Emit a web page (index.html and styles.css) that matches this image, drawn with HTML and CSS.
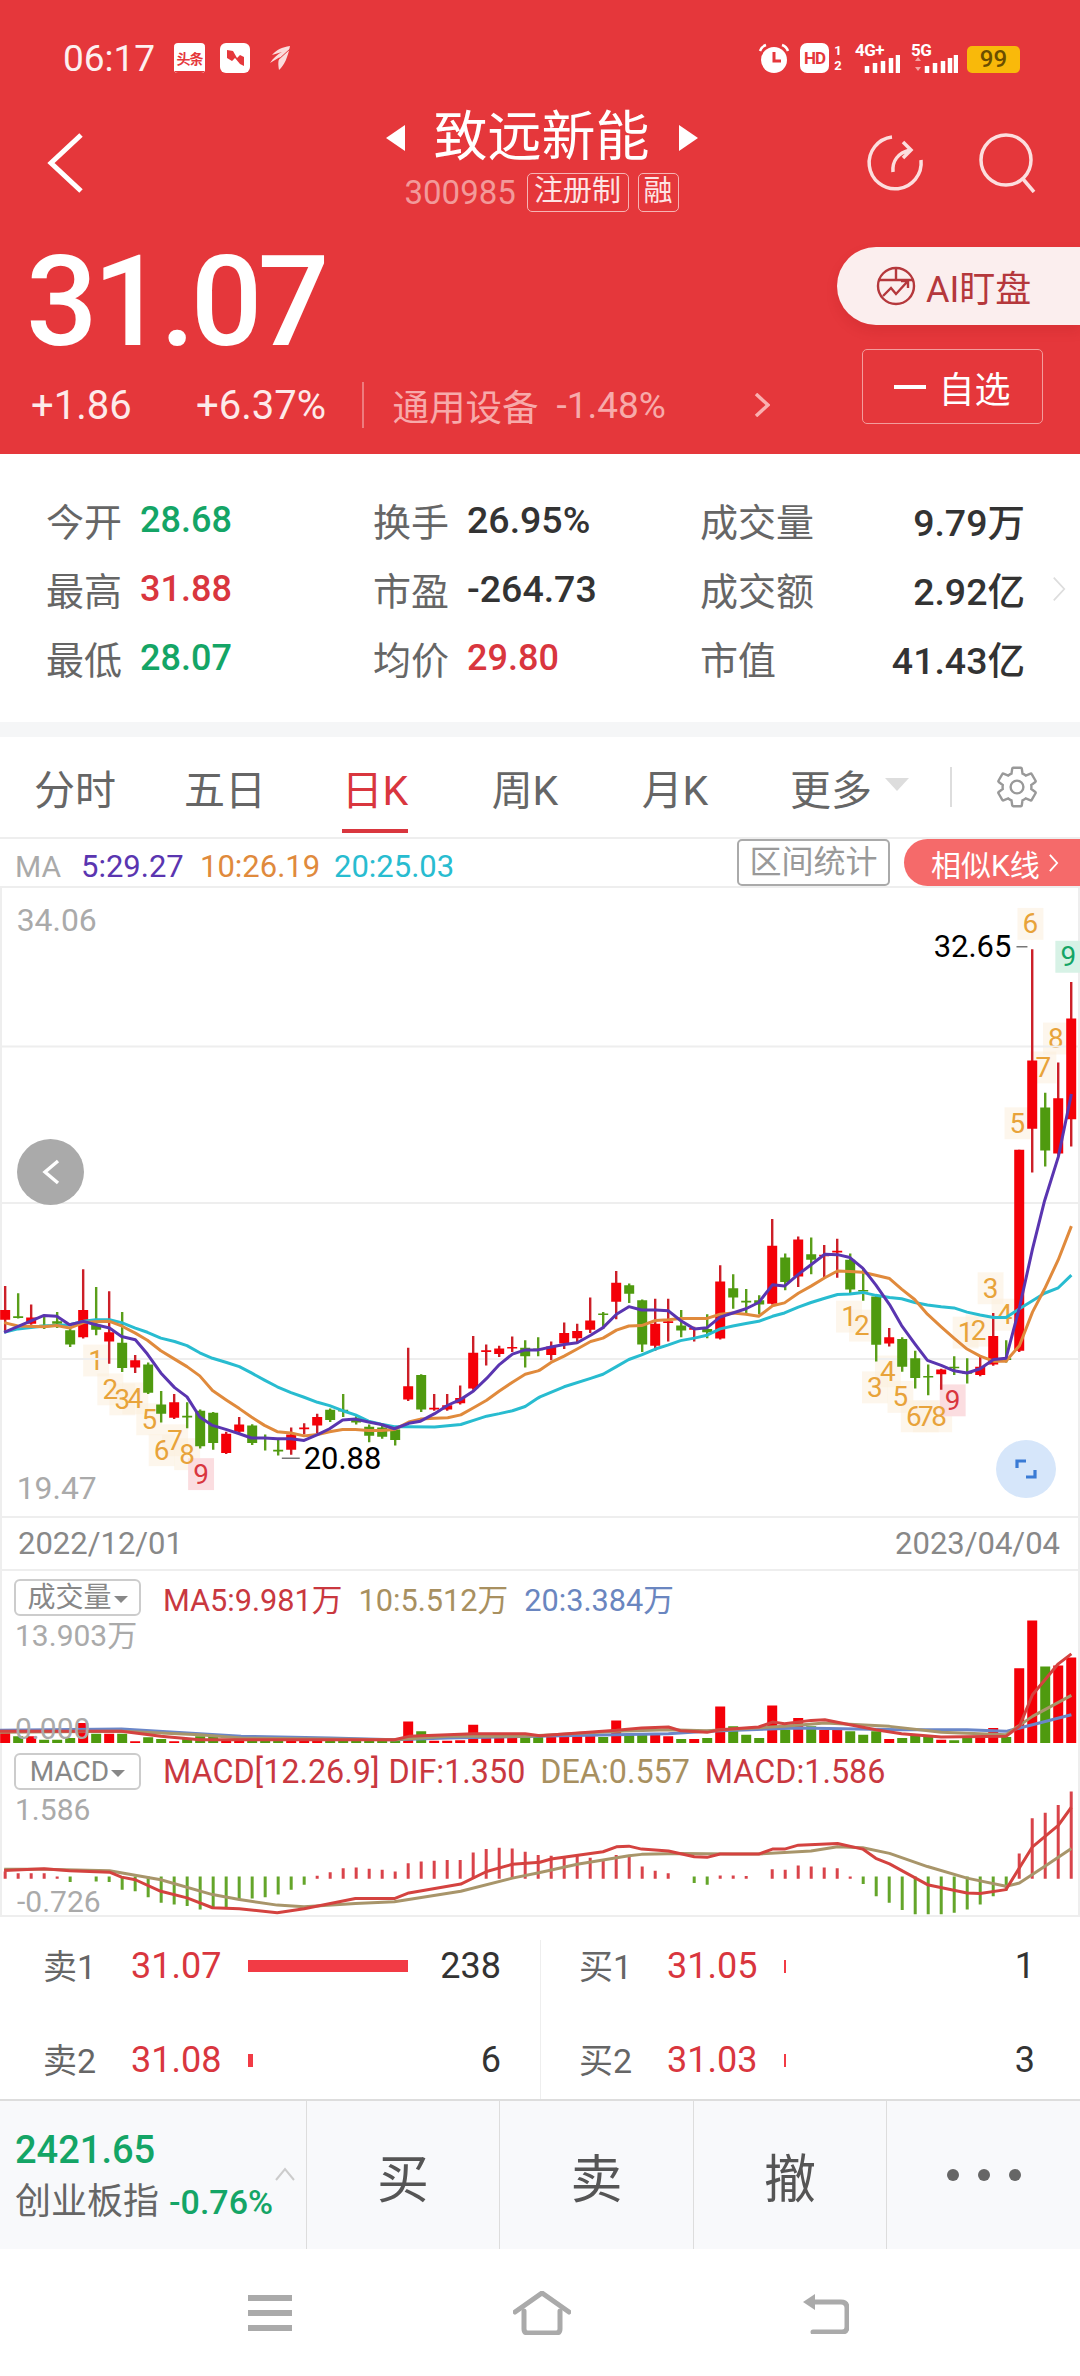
FILE: index.html
```html
<!DOCTYPE html>
<html lang="zh-CN">
<head>
<meta charset="utf-8">
<title>致远新能</title>
<link rel="stylesheet" href="styles.css">
</head>
<body>
<div class="app">
  <header class="hero">
    <div class="status">
      <div class="status-left">
        <span class="clock">06:17</span>
        <span class="app-toutiao"><i>头条</i></span>
        <svg class="ic-ribbon" viewBox="0 0 30 30"><rect width="30" height="30" rx="6" fill="#fff"/><path d="M7 7l6 1 4 7 3-3 4 2v9l-4-2-5-6-3 3-5-3z" fill="#e5373b"/></svg>
        <svg class="ic-wing" viewBox="0 0 22 24"><path d="M21 0C13 1 7 4 3 9l10-3C9 8 4 12 1 17l10-6c-2 3-2 7-1 13 5-4 9-13 11-24z" fill="#fbdcdc"/><path d="M21 3L9 14" stroke="#e5373b" stroke-width="1"/></svg>
      </div>
      <div class="status-right">
        <svg class="ic-alarm" viewBox="0 0 32 30"><circle cx="16" cy="17" r="13" fill="#fff"/><path d="M16 9v9h7" fill="none" stroke="#e5373b" stroke-width="3"/><path d="M2 8c1-3 3-5 6-6M30 8c-1-3-3-5-6-6" fill="none" stroke="#fff" stroke-width="2.5"/></svg>
        <span class="hd">HD</span>
        <span class="sim"><i>1</i><i>2</i></span>
        <span class="net net-4g"><b>4G+</b><svg viewBox="0 0 36 18"><path d="M3 11v7M11 8v10M19 6v12M27 3v15M34 0v18" stroke="#fff" stroke-width="4.5"/></svg></span>
        <span class="net net-5g"><b>5G</b><svg viewBox="0 0 46 18"><path d="M3 6l3-4 3 4zM3 12l3 4 3-4z" fill="#f6a5a5"/><path d="M15 11v7M23 8v10M31 6v12M38 3v15M44 0v18" stroke="#fff" stroke-width="4.5"/></svg></span>
        <span class="battery">99</span>
      </div>
    </div>

    <div class="titlebar">
      <svg class="ic-back" viewBox="0 0 36 60"><path d="M34 2L4 30l30 28" fill="none" stroke="#fff" stroke-width="5"/></svg>
      <div class="title-block">
        <div class="title-row">
          <svg class="ic-tri" viewBox="0 0 19 26"><path d="M19 0v26L0 13z" fill="#fff"/></svg>
          <h1 class="name">致远新能</h1>
          <svg class="ic-tri" viewBox="0 0 19 26"><path d="M0 0v26l19-13z" fill="#fff"/></svg>
        </div>
        <div class="code-row">
          <span class="code">300985</span>
          <span class="tag tag-wide">注册制</span>
          <span class="tag">融</span>
        </div>
      </div>
      <div class="title-actions">
        <svg class="ic-refresh" viewBox="0 0 58 60"><path d="M26 4A26 26 0 1 0 55 27" fill="none" stroke="#fcdede" stroke-width="3.5"/><path d="M27 39C26 28 32 20 44 17M37 9l8 8-8 8" fill="none" stroke="#fcdede" stroke-width="3.5"/></svg>
        <svg class="ic-search" viewBox="0 0 58 60"><circle cx="28" cy="27" r="25" fill="none" stroke="#fcdede" stroke-width="3.5"/><path d="M45 46l11 13" fill="none" stroke="#fcdede" stroke-width="3.5"/></svg>
      </div>
    </div>

    <div class="quote">
      <div class="quote-left">
        <div class="price">31.07</div>
        <div class="change-row">
          <span class="chg chg-a">+1.86</span>
          <span class="chg chg-b">+6.37%</span>
          <span class="vline"></span>
          <span class="sector">通用设备</span>
          <span class="sector-chg">-1.48%</span>
          <svg class="ic-more" viewBox="0 0 16 24"><path d="M2 1l12 11L2 23" fill="none" stroke="#fab0b0" stroke-width="3.5"/></svg>
        </div>
      </div>
      <div class="quote-right">
        <div class="ai-pill">
          <svg class="ic-ai" viewBox="0 0 40 40"><circle cx="20" cy="20" r="18" fill="none" stroke="#b5383c" stroke-width="2.4"/><path d="M3 14h34M20 2v12" fill="none" stroke="#b5383c" stroke-width="2.4"/><path d="M7 30l8-8 5 6 11-12M25 15h7v7" fill="none" stroke="#b5383c" stroke-width="2.4"/></svg>
          <span>AI盯盘</span>
        </div>
        <div class="watch-btn"><span class="minus"></span><span>自选</span></div>
      </div>
    </div>
  </header>

  <section class="stats">
    <div class="stat"><span class="k">今开</span><span class="v green">28.68</span></div>
    <div class="stat"><span class="k">换手</span><span class="v">26.95%</span></div>
    <div class="stat apart"><span class="k">成交量</span><span class="v">9.79万</span></div>
    <div class="stat"><span class="k">最高</span><span class="v red">31.88</span></div>
    <div class="stat"><span class="k">市盈</span><span class="v">-264.73</span></div>
    <div class="stat apart"><span class="k">成交额</span><span class="v">2.92亿</span></div>
    <div class="stat"><span class="k">最低</span><span class="v green">28.07</span></div>
    <div class="stat"><span class="k">均价</span><span class="v red">29.80</span></div>
    <div class="stat apart"><span class="k">市值</span><span class="v">41.43亿</span></div>
    <svg class="ic-stats-more" viewBox="0 0 16 30"><path d="M2 2l12 13L2 28" fill="none" stroke="#ddd" stroke-width="2"/></svg>
  </section>

  <div class="band"></div>

  <nav class="tabs">
    <div class="tab">分时</div>
    <div class="tab">五日</div>
    <div class="tab on">日K</div>
    <div class="tab">周K</div>
    <div class="tab">月K</div>
    <div class="tab more">更多<span class="caret"></span></div>
    <span class="tab-sep"></span>
    <svg class="ic-gear" viewBox="0 0 24 24"><path d="M19.14 12.94c.04-.3.06-.61.06-.94 0-.32-.02-.64-.07-.94l2.03-1.58c.18-.14.23-.41.12-.61l-1.92-3.32c-.12-.22-.37-.29-.59-.22l-2.39.96c-.5-.38-1.03-.7-1.62-.94l-.36-2.54c-.04-.24-.24-.41-.48-.41h-3.84c-.24 0-.43.17-.47.41l-.36 2.54c-.59.24-1.13.57-1.62.94l-2.39-.96c-.22-.08-.47 0-.59.22L2.74 8.87c-.12.21-.08.47.12.61l2.03 1.58c-.05.3-.09.63-.09.94s.02.64.07.94l-2.03 1.58c-.18.14-.23.41-.12.61l1.92 3.32c.12.22.37.29.59.22l2.39-.96c.5.38 1.03.7 1.62.94l.36 2.54c.05.24.24.41.48.41h3.84c.24 0 .44-.17.47-.41l.36-2.54c.59-.24 1.13-.56 1.62-.94l2.39.96c.22.08.47 0 .59-.22l1.92-3.32c.12-.22.07-.47-.12-.61l-2.01-1.58z" fill="none" stroke="#999" stroke-width="1.2"/><circle cx="12" cy="12" r="3.2" fill="none" stroke="#999" stroke-width="1.2"/></svg>
  </nav>

  <div class="ma-row">
    <span class="ma-label">MA</span>
    <span class="ma5">5:29.27</span>
    <span class="ma10">10:26.19</span>
    <span class="ma20">20:25.03</span>
    <span class="range-btn">区间统计</span>
    <span class="similar-btn">相似K线<svg viewBox="0 0 12 22"><path d="M2 2l8 9-8 9" fill="none" stroke="#fff" stroke-width="2"/></svg></span>
  </div>

  <section class="chart-main">
    <svg id="notes" class="notes" viewBox="0 0 1080 630">
      <text class="axis" x="15" y="32">34.06</text>
      <text class="axis" x="15" y="602">19.47</text>
      <text class="extreme" x="303" y="572">20.88</text>
      <text class="extreme" x="935" y="59">32.65</text>
      <path d="M281 572h18M1018 59h11" stroke="#777" stroke-width="1.5"/>
    </svg>
    <svg id="kline" class="plot" viewBox="0 19 3136 1497" preserveAspectRatio="none"></svg>
    <div class="round-back"><svg viewBox="0 0 18 26"><path d="M16 2L3 13l13 11" fill="none" stroke="#fff" stroke-width="3.4"/></svg></div>
    <div class="round-expand"><svg viewBox="0 0 22 22"><path d="M2 10V3h9M20 12v7h-9" fill="none" stroke="#3a7bd5" stroke-width="3.2"/></svg></div>
  </section>

  <div class="dates"><span>2022/12/01</span><span>2023/04/04</span></div>

  <section class="panel panel-vol">
    <svg id="vol" class="plot" viewBox="0 183 3136 517" preserveAspectRatio="none"></svg>
    <div class="panel-head">
      <span class="sel">成交量<i></i></span>
      <span class="c-red">MA5:9.981万</span>
      <span class="c-tan">10:5.512万</span>
      <span class="c-blue">20:3.384万</span>
    </div>
    <div class="panel-max">13.903万</div>
    <div class="panel-min vol-min">0.000</div>
  </section>

  <section class="panel panel-macd">
    <svg id="macd" class="plot" viewBox="0 700 3136 522" preserveAspectRatio="none"></svg>
    <div class="panel-head">
      <span class="sel">MACD<i></i></span>
      <span class="c-red macd-params">MACD[12.26.9]</span>
      <span class="c-red">DIF:1.350</span>
      <span class="c-tan">DEA:0.557</span>
      <span class="c-red">MACD:1.586</span>
    </div>
    <div class="panel-max">1.586</div>
    <div class="panel-min macd-min">-0.726</div>
  </section>

  <section class="book">
    <div class="book-col">
      <div class="book-row"><span class="bk">卖1</span><span class="bp">31.07</span><span class="bar bar-long"></span><span class="bq">238</span></div>
      <div class="book-row"><span class="bk">卖2</span><span class="bp">31.08</span><span class="bar bar-short"></span><span class="bq">6</span></div>
    </div>
    <div class="book-col book-col-right">
      <div class="book-row"><span class="bk">买1</span><span class="bp">31.05</span><span class="bar bar-tick"></span><span class="bq">1</span></div>
      <div class="book-row"><span class="bk">买2</span><span class="bp">31.03</span><span class="bar bar-tick"></span><span class="bq">3</span></div>
    </div>
  </section>

  <section class="tradebar">
    <div class="index-cell">
      <div class="idx-val">2421.65</div>
      <div class="idx-line"><span class="idx-name">创业板指</span><span class="idx-chg">-0.76%</span></div>
      <svg class="ic-up" viewBox="0 0 20 14"><path d="M1 13l9-11 9 11" fill="none" stroke="#ccc" stroke-width="2"/></svg>
    </div>
    <div class="act">买</div>
    <div class="act">卖</div>
    <div class="act">撤</div>
    <div class="act dots"><i></i><i></i><i></i></div>
  </section>

  <footer class="navbar">
    <svg class="nav-menu" viewBox="0 0 44 36"><path d="M0 3h44M0 18h44M0 33h44" stroke="#aaa" stroke-width="6"/></svg>
    <svg class="nav-home" viewBox="0 0 58 44"><path d="M2 21L29 2l27 19" fill="none" stroke="#aaa" stroke-width="5" stroke-linecap="round" stroke-linejoin="round"/><path d="M11 20v18q0 4 4 4h28q4 0 4-4V20" fill="none" stroke="#aaa" stroke-width="5" stroke-linecap="round"/></svg>
    <svg class="nav-back" viewBox="0 0 48 42"><path d="M2 10l12-8v16z" fill="#aaa"/><path d="M10 10h30q6 0 6 6v19q0 5-5 5H12" fill="none" stroke="#aaa" stroke-width="5" stroke-linecap="round"/></svg>
  </footer>
</div>
<script src="chart.js"></script>
</body>
</html>
```

FILE: styles.css
```css
* { box-sizing: border-box; margin: 0; padding: 0; }
html, body { width: 1080px; height: 2376px; background: #fff; overflow: hidden; }
body { font-family: Roboto, "Noto Sans CJK SC", sans-serif; color: #333; }
i { font-style: normal; }
svg { display: block; flex: none; }
.app { width: 1080px; height: 2376px; display: flex; flex-direction: column; }

/* hero */
.hero { height: 454px; padding-top: 43px; background: #e5373b; color: #fff; }
.status { display: flex; justify-content: space-between; align-items: center; height: 30px; padding: 0 60px 0 63px; }
.status-left, .status-right { display: flex; align-items: center; }
.clock { font-size: 37px; width: 111px; color: #fdf0f0; }
.app-toutiao { width: 31px; height: 30px; background: #fff; border-top: 3px solid #fff; border-radius: 4px; overflow: hidden; display: flex; align-items: center; justify-content: center; }
.app-toutiao i { display: block; width: 100%; background: #fff; color: #e5373b; font-size: 14px; font-weight: 700; line-height: 24px; text-align: center; letter-spacing: -1px; white-space: nowrap; border-bottom: 2px solid #e5373b; }
.ic-ribbon { width: 30px; height: 30px; margin-left: 15px; }
.ic-wing { width: 22px; height: 24px; margin-left: 19px; }
.ic-alarm { width: 32px; height: 30px; }
.hd { width: 29px; height: 30px; margin-left: 10px; background: #fff; color: #e5373b; font-size: 17px; font-weight: 700; border-radius: 7px; text-align: center; line-height: 30px; letter-spacing: -1px; }
.sim { display: flex; flex-direction: column; width: 14px; margin-left: 2px; font-size: 13px; font-weight: 700; line-height: 15px; text-align: center; }
.net { position: relative; display: block; height: 30px; }
.net b { position: absolute; top: -2px; left: 0; font-size: 17px; font-weight: 700; line-height: 18px; white-space: nowrap; letter-spacing: -.5px; }
.net svg { position: absolute; bottom: 0; right: 0; height: 18px; }
.net-4g { width: 45px; margin-left: 10px; }
.net-4g svg { width: 36px; }
.net-5g { width: 47px; margin-left: 11px; }
.net-5g svg { width: 46px; }
.battery { width: 53px; height: 27px; margin-left: 9px; margin-top: 3px; background: #f9b90a; color: #6b4e00; font-size: 24px; font-weight: 500; line-height: 27px; text-align: center; border-radius: 5px; }

.titlebar { display: grid; grid-template-columns: 1fr auto 1fr; height: 100px; margin-top: 39px; padding: 0 44px 0 47px; }
.ic-back { width: 36px; height: 60px; margin-top: 21px; }
.title-block { display: flex; flex-direction: column; align-items: center; }
.title-row { display: flex; align-items: center; gap: 29px; height: 58px; margin-top: -3px; }
.ic-tri { width: 19px; height: 26px; }
.name { font-size: 54px; font-weight: 400; line-height: 58px; color: #fff; }
.code-row { display: flex; align-items: center; margin-top: 6px; height: 39px; }
.code { font-size: 33px; color: #f29a9a; width: 122px; }
.tag { display: block; height: 39px; width: 41px; border: 1.5px solid #f6b4b4; border-radius: 5px; font-size: 29px; line-height: 35px; text-align: center; color: #fde4e4; margin-left: 9px; }
.tag-wide { width: 102px; margin-left: 0; }
.title-actions { display: flex; justify-content: flex-end; gap: 54px; padding-top: 21px; }
.ic-refresh, .ic-search { width: 58px; height: 60px; }

.quote { display: flex; justify-content: space-between; margin-top: 35px; }
.quote-left { padding-left: 26px; }
.price { font-size: 126px; font-weight: 500; line-height: 110px; letter-spacing: -4.5px; color: #fff; }
.change-row { display: flex; align-items: center; height: 46px; margin-top: 25px; padding-left: 5px; font-size: 40px; white-space: nowrap; }
.chg { color: #fdeaea; }
.chg-a { width: 165px; }
.chg-b { width: 166px; }
.vline { width: 1.5px; height: 46px; background: #ee7b7e; }
.sector { margin-left: 29px; color: #f7aaaa; font-size: 36.5px; }
.sector-chg { margin-left: 18px; width: 197px; color: #f7aaaa; font-size: 37px; }
.ic-more { width: 16px; height: 24px; }
.quote-right { width: 243px; display: flex; flex-direction: column; align-items: flex-start; }
.ai-pill { width: 243px; height: 78px; display: flex; align-items: center; padding-left: 39px; gap: 10px; background: #fbeeee; border-radius: 39px 0 0 39px; color: #b5383c; font-size: 36px; white-space: nowrap; box-shadow: 0 6px 12px rgba(150, 20, 20, .15); }
.ic-ai { width: 40px; height: 40px; }
.watch-btn { width: 181px; height: 75px; margin: 24px 0 0 25px; display: flex; align-items: center; justify-content: center; gap: 12px; border: 1.5px solid #f39c9c; border-radius: 5px; color: #fff; font-size: 36px; }
.minus { width: 32px; height: 4px; background: #fff; }

/* stats */
.stats { height: 268px; padding: 31px 0 0 46px; display: grid; grid-template-columns: 327px 327px 325px; grid-auto-rows: 69px; align-items: center; position: relative; }
.stat { display: flex; align-items: center; gap: 18px; font-size: 38px; white-space: nowrap; }
.stat .v { font-size: 37.5px; font-weight: 500; color: #333; }
.stat .k { color: #666; }
.stat.apart { justify-content: space-between; }
.stat .v.green { font-size: 36px; color: #14a566; }
.stat .v.red { font-size: 36px; color: #d9363e; }
.ic-stats-more { position: absolute; left: 1052px; top: 120px; width: 14px; height: 30px; }
.band { height: 15px; background: #f5f6f7; }

/* tabs */
.tabs { height: 100px; display: flex; align-items: center; }
.tab { width: 150px; text-align: center; font-size: 41px; color: #666; position: relative; }
.tab.on { color: #d9363e; }
.tab.on::after { content: ""; position: absolute; left: 42px; width: 66px; height: 4px; background: #d9363e; top: 72px; }
.tab.more { padding-left: 12px; }
.caret { position: absolute; left: 135px; top: 21px; width: 0; height: 0; border-left: 12px solid transparent; border-right: 12px solid transparent; border-top: 13px solid #ddd; }
.tab-sep { width: 1.5px; height: 40px; margin-left: 50px; background: #ddd; }
.ic-gear { width: 48px; height: 48px; margin-left: 41px; }

/* MA row */
.ma-row { height: 51px; display: flex; align-items: center; padding-left: 15px; border-top: 2px solid #eee; border-bottom: 2px solid #eee; font-size: 31px; white-space: nowrap; }
.ma-label { color: #aaa; width: 66px; font-size: 30px; padding-top: 7px; }
.ma5 { color: #5a35b0; width: 119px; padding-top: 7px; }
.ma10 { color: #e08a3c; width: 134px; padding-top: 7px; }
.ma20 { color: #28bcd0; width: 403px; padding-top: 7px; }
.range-btn { width: 153px; height: 47px; border: 2px solid #aaa; border-radius: 5px; color: #999; font-size: 32px; line-height: 42px; text-align: center; }
.similar-btn { margin-left: 14px; width: 176px; height: 47px; background: #f56a6a; border-radius: 24px 0 0 24px; color: #fff; font-size: 30px; display: flex; align-items: center; padding-left: 27px; gap: 8px; }
.similar-btn svg { width: 11px; height: 20px; }

/* charts */
.chart-main { position: relative; height: 630px; box-shadow: inset 2px 0 #eee, inset -2px 0 #eee; border-bottom: 2px solid #eee; }
.plot, .notes { position: absolute; left: 0; top: 0; width: 100%; height: 100%; }
.plot path, .plot line, .plot polyline { vector-effect: non-scaling-stroke; fill: none; }
.grid { stroke: #eee; stroke-width: 2px; }
.wick-r { stroke: #cc1f28; stroke-width: 2.4px; }
.wick-g { stroke: #5a9e1a; stroke-width: 2.4px; }
.body-r { stroke: #f40008; stroke-width: 10px; }
.body-g { stroke: #4f9a0f; stroke-width: 10px; }
.line5 { stroke: #5a35b0; stroke-width: 3px; stroke-linejoin: round; }
.line10 { stroke: #e08a3c; stroke-width: 3px; stroke-linejoin: round; }
.line20 { stroke: #28bcd0; stroke-width: 3px; stroke-linejoin: round; }
.vline-red { stroke: #d4423f; stroke-width: 3px; stroke-linejoin: round; }
.vline-tan { stroke: #a8956a; stroke-width: 3px; stroke-linejoin: round; }
.vline-blue { stroke: #6a86c8; stroke-width: 3px; stroke-linejoin: round; }
.hist-r { stroke: #d9434a; stroke-width: 3px; }
.hist-g { stroke: #64a52a; stroke-width: 3px; }
.axis { font-size: 32px; fill: #aaa; dominant-baseline: central; }
.extreme { font-size: 31px; fill: #000; dominant-baseline: central; }
.td { font-size: 28px; text-anchor: middle; dominant-baseline: central; fill: #e8a33a; }
.td-bg { fill: #fceedd; opacity: .55; }
.td-pink { fill: #d9363e; }
.td-pink-bg { fill: #fbdde0; }
.td-green { fill: #14a566; }
.td-green-bg { fill: #d7f2e6; }
.round-back { position: absolute; left: 17px; top: 251px; width: 67px; height: 66px; border-radius: 50%; background: #aaa; display: flex; align-items: center; justify-content: center; }
.round-back svg { width: 18px; height: 26px; }
.round-expand { position: absolute; left: 996px; top: 552px; width: 60px; height: 58px; border-radius: 50%; background: #d6e6fa; display: flex; align-items: center; justify-content: center; }
.round-expand svg { width: 22px; height: 22px; }

.dates { height: 53px; display: flex; justify-content: space-between; align-items: center; padding: 0 20px 0 18px; font-size: 31px; color: #888; box-shadow: inset 2px 0 #eee, inset -2px 0 #eee; border-bottom: 2px solid #eee; }
.panel { position: relative; box-shadow: inset 2px 0 #eee, inset -2px 0 #eee; }
.panel-vol { height: 172px; }
.panel-macd { height: 174px; border-bottom: 2px solid #eee; }
.panel-head { position: relative; display: flex; align-items: center; height: 37px; margin: 8px 0 0 14px; font-size: 30.7px; gap: 16px; white-space: nowrap; }
.panel-macd .panel-head { margin-top: 10px; font-size: 32.3px; gap: 15px; }
.sel { width: 127px; height: 37px; border: 2px solid #ccc; border-radius: 6px; font-size: 28px; line-height: 33px; color: #888; display: flex; align-items: center; justify-content: center; gap: 2px; margin-right: 6px; }
.panel-macd .sel { font-size: 28px; margin-right: 7px; }
.macd-params { margin-right: -6px; }
.sel i { width: 0; height: 0; border-left: 7px solid transparent; border-right: 7px solid transparent; border-top: 7px solid #888; margin-top: 3px; }
.c-red { color: #c9383f; }
.c-tan { color: #a89060; }
.c-blue { color: #6a86c0; }
.panel-max { position: relative; margin: 2px 0 0 15px; font-size: 30px; line-height: 36px; color: #aaa; }
.panel-min { position: absolute; left: 15px; font-size: 30px; line-height: 26px; color: #aaa; }
.vol-min { top: 145px; }
.macd-min { top: 146px; left: 17px; }

/* order book */
.book { height: 182px; display: flex; }
.book-col { width: 540px; height: 159px; margin-top: 23px; padding: 1px 39px 0 43px; display: flex; flex-direction: column; gap: 44px; }
.book-col-right { border-left: 1.5px solid #eee; padding: 1px 45px 0 38px; }
.book-row { height: 50px; display: flex; align-items: center; font-size: 36px; }
.bk { width: 88px; color: #666; font-size: 34px; white-space: nowrap; padding-bottom: 4px; }
.bp { width: 117px; color: #d9363e; }
.bar { display: block; background: #f23b45; }
.bar-long { width: 160px; height: 12px; }
.bar-short { width: 5px; height: 13px; }
.bar-tick { width: 2px; height: 13px; }
.bq { margin-left: auto; color: #333; }

/* trade bar */
.tradebar { height: 150px; display: grid; grid-template-columns: 306px 193px 194px 193px 194px; background: #f8f9fb; border-top: 2px solid #ddd; }
.index-cell { position: relative; padding: 24px 0 0 15px; }
.idx-val { font-size: 38px; font-weight: 500; color: #14a566; line-height: 50px; }
.idx-line { display: flex; align-items: center; gap: 10px; margin-top: 2px; line-height: 50px; white-space: nowrap; }
.idx-name { font-size: 36px; color: #666; }
.idx-chg { font-size: 34px; font-weight: 500; color: #14a566; }
.ic-up { position: absolute; left: 275px; top: 66px; width: 20px; height: 14px; }
.act { display: flex; align-items: center; justify-content: center; border-left: 1.5px solid #ddd; font-size: 52px; color: #555; }
.dots { gap: 19px; }
.dots i { width: 12px; height: 12px; border-radius: 50%; background: #666; }

/* navigation */
.navbar { flex: 1; display: flex; align-items: center; padding-left: 248px; }
.nav-menu { width: 44px; height: 36px; }
.nav-home { width: 58px; height: 44px; margin-left: 221px; }
.nav-back { width: 48px; height: 42px; margin-left: 230px; }
```

FILE: chart.js
```js
(function () {
  var NS = "http://www.w3.org/2000/svg";
  function el(parent, name, attrs, text) {
    var n = document.createElementNS(NS, name);
    for (var k in attrs) n.setAttribute(k, attrs[k]);
    if (text !== undefined) n.textContent = text;
    parent.appendChild(n);
    return n;
  }
  function xOf(i) { return 15 + 37.75 * i; }
  function pts(left, right) {
    var out = [], i;
    for (i = 0; i < left.length; i += 2) out.push(left[i] + "," + left[i + 1]);
    for (i = 0; i < right.length; i += 2) out.push((right[i] + 1568) + "," + right[i + 1]);
    return out.join(" ");
  }

  /* colour, high, body top, body bottom, low */
  var candles = [
    "r",968,1025,1048,1080, "g",985,1040,1042,1045, "r",1012,1043,1058,1060, "g",1040,1060,1063,1070,
    "g",1030,1052,1058,1068, "g",1070,1073,1107,1113, "r",928,1025,1090,1093, "g",970,1060,1072,1085,
    "r",980,1078,1100,1153, "g",1030,1103,1163,1173, "r",1132,1145,1162,1175, "g",1150,1155,1222,1225,
    "g",1218,1250,1272,1293, "r",1225,1245,1282,1285, "g",1245,1277,1281,1307, "g",1262,1265,1350,1355,
    "g",1268,1270,1342,1358, "r",1315,1320,1366,1368, "r",1280,1298,1315,1320, "g",1297,1300,1342,1347,
    "g",1322,1328,1331,1360, "g",1330,1358,1361,1372, "r",1305,1322,1358,1370, "r",1295,1305,1308,1322,
    "r",1272,1280,1300,1318, "g",1260,1263,1287,1292, "g",1225,1263,1266,1280, "g",1278,1283,1293,1298,
    "g",1298,1303,1325,1340, "g",1300,1305,1327,1332, "g",1305,1310,1335,1348, "r",1115,1207,1238,1242,
    "g",1178,1180,1262,1268, "r",1225,1258,1262,1265, "r",1225,1252,1262,1265, "r",1205,1235,1247,1250,
    "r",1087,1127,1212,1215, "r",1107,1121,1124,1157, "r",1110,1117,1130,1137, "r",1088,1113,1116,1125,
    "g",1097,1115,1135,1162, "g",1090,1117,1120,1135, "r",1100,1112,1132,1145, "r",1055,1080,1105,1118,
    "r",1058,1075,1092,1105, "r",995,1050,1072,1080, "g",1030,1033,1036,1070, "r",932,960,1005,1047,
    "g",962,966,986,1008, "g",1000,1002,1107,1125, "r",998,1058,1110,1122, "r",998,1052,1056,1100,
    "g",1025,1062,1074,1090, "r",1065,1068,1072,1100, "g",1035,1070,1078,1092, "r",918,957,1093,1095,
    "g",940,973,995,1022, "g",975,1003,1006,1032, "g",990,1002,1012,1035, "r",808,872,1010,1012,
    "g",890,900,958,978, "r",850,857,945,970, "g",852,892,905,940, "r",870,893,896,948,
    "r",855,884,888,948, "g",890,905,976,985, "g",925,977,980,1003, "g",990,993,1108,1148,
    "r",1068,1090,1105,1112, "g",1090,1094,1160,1172, "g",1122,1140,1187,1212, "g",1155,1182,1186,1228,
    "r",1165,1167,1178,1215, "g",1135,1160,1163,1180, "g",1140,1173,1176,1200, "r",1133,1160,1180,1183,
    "r",1032,1087,1155,1158, "g",1097,1140,1143,1150, "r",643,643,1122,1125, "r",165,430,593,697,
    "g",507,542,645,683, "r",435,520,652,655, "r",243,330,570,635
  ];

  var kline = document.getElementById("kline");
  [397, 770, 1142].forEach(function (y) {
    el(kline, "line", { "class": "grid", x1: 0, x2: 3136, y1: y, y2: y });
  });
  var w = { r: "", g: "" }, b = { r: "", g: "" };
  for (var c = 0; c < candles.length; c += 5) {
    var x = xOf(c / 5), col = candles[c];
    w[col] += "M" + x + " " + candles[c + 1] + "V" + candles[c + 4];
    b[col] += "M" + x + " " + candles[c + 2] + "V" + Math.max(candles[c + 3], candles[c + 2] + 4);
  }
  el(kline, "path", { "class": "wick-r", d: w.r });
  el(kline, "path", { "class": "wick-g", d: w.g });
  el(kline, "path", { "class": "body-r", d: b.r });
  el(kline, "path", { "class": "body-g", d: b.g });

  el(kline, "polyline", { "class": "line20", points: pts(
    [12,1078,52,1070,128,1063,202,1060,242,1052,278,1048,318,1048,353,1055,393,1068,428,1078,467,1092,507,1100,543,1110,580,1127,617,1140,658,1150,695,1160,730,1175,768,1192,805,1208,845,1222,883,1233,922,1245,957,1253,995,1265,1032,1275,1070,1290,1107,1297,1145,1303,1187,1303,1262,1304,1338,1298,1375,1288,1413,1278,1450,1272,1488,1265,1525,1255,1562,1235],
    [0,1232,70,1208,147,1188,183,1178,222,1160,258,1143,295,1132,335,1118,373,1108,408,1098,448,1092,485,1085,523,1070,560,1063,598,1057,635,1052,675,1040,710,1032,750,1018,787,1007,827,997,864,988,900,987,937,983,975,990,1015,995,1050,998,1088,1007,1125,1013,1165,1017,1202,1020,1240,1030,1278,1037,1317,1043,1353,1043,1392,1022,1430,1003,1465,985,1505,972,1543,942]) });
  el(kline, "polyline", { "class": "line10", points: pts(
    [12,1055,52,1063,128,1065,165,1062,202,1068,242,1055,278,1053,318,1052,353,1063,393,1080,428,1097,467,1122,507,1142,543,1160,580,1182,617,1217,658,1240,695,1260,730,1280,768,1300,805,1315,845,1318,883,1325,922,1322,957,1315,995,1310,1032,1310,1070,1312,1107,1312,1145,1310,1187,1292,1221,1285,1262,1283,1300,1282,1338,1275,1375,1258,1413,1240,1450,1218,1488,1197,1525,1178,1562,1170],
    [0,1168,32,1150,70,1135,108,1118,147,1100,183,1092,222,1073,258,1063,295,1062,335,1050,373,1048,408,1045,448,1045,485,1045,523,1035,560,1032,598,1035,635,1040,675,1015,710,1008,750,985,787,968,827,948,864,932,900,933,937,935,975,942,1015,950,1050,975,1088,1000,1125,1035,1165,1065,1202,1092,1240,1118,1278,1135,1317,1147,1353,1147,1392,1110,1430,1030,1465,975,1505,905,1543,825]) });
  el(kline, "polyline", { "class": "line5", points: pts(
    [12,1078,92,1050,128,1038,165,1040,202,1060,242,1052,278,1060,318,1068,353,1088,393,1096,428,1130,467,1175,507,1210,543,1232,580,1280,617,1300,658,1310,695,1320,730,1330,768,1330,805,1332,845,1332,883,1336,922,1322,957,1308,995,1287,1032,1285,1070,1292,1107,1298,1145,1308,1187,1295,1221,1290,1262,1272,1300,1252,1338,1238,1375,1218,1413,1188,1450,1155,1488,1130,1525,1120,1562,1120],
    [32,1113,70,1107,108,1103,147,1085,183,1067,222,1035,258,1017,295,1025,335,1025,373,1027,408,1050,448,1070,485,1067,523,1042,560,1032,598,1022,635,1007,675,965,710,968,750,940,787,917,827,892,864,893,900,900,937,925,975,965,1015,1012,1050,1062,1088,1105,1125,1145,1165,1157,1202,1170,1240,1175,1278,1165,1317,1143,1353,1140,1392,1020,1430,880,1465,765,1505,660,1543,510]) });

  /* sequential count marks: x, y, digit, kind */
  var marks = [
    94.7,474,1,"", 109,503,2,"", 121,513,3,"", 134,512,4,"", 148,533,5,"", 160.5,564,6,"", 174,554,7,"", 186,568,8,"", 200,588,9,"pink",
    850,430,1,"", 863,439,2,"", 876,501,3,"", 889,485,4,"", 901.6,510.5,5,"", 915,530,6,"", 927,530,7,"", 940.5,530,8,"", 954,514,9,"pink",
    967,446,1,"", 980,444,2,"", 992,401.5,3,"", 1006,428,4,"", 1019,236,5,"", 1032,36,6,"", 1045,180,7,"", 1057.6,151,8,"", 1070,69,9,"green"
  ];
  var notes = document.getElementById("notes");
  for (var m = 0; m < marks.length; m += 4) {
    var kind = marks[m + 3];
    el(notes, "rect", { "class": kind ? "td-" + kind + "-bg" : "td-bg", x: marks[m] - 13, y: marks[m + 1] - 16, width: 26, height: 32 });
  }
  for (m = 0; m < marks.length; m += 4) {
    kind = marks[m + 3];
    el(notes, "text", { "class": kind ? "td td-" + kind : "td", x: marks[m], y: marks[m + 1] }, marks[m + 2]);
  }

  /* volume: colour, top */
  var bars = "r662 g680 r680 g690 g690 g685 r640 g672 r672 g672 r695 g683 g688 r695 g688 g680 g680 r688 r685 g690 g693 g693 r685 r692 r688 g688 g693 g693 g690 g690 g690 r635 g665 r693 r693 r692 r645 r682 r685 r685 g680 g680 r680 r670 r680 r668 g682 r632 g675 g675 r670 r680 g688 r688 g685 r590 g650 g675 g685 r587 g660 r625 g650 r660 r660 g665 g675 g665 r688 g685 g675 g682 r690 g692 g685 r680 r655 g682 r475 r332 g470 r467 r443".split(" ");
  var vol = document.getElementById("vol");
  var vr = "", vg = "";
  bars.forEach(function (s, i) {
    var d = "M" + xOf(i) + " " + s.slice(1) + "V700";
    if (s[0] === "r") vr += d; else vg += d;
  });
  el(vol, "path", { "class": "body-r", d: vr });
  el(vol, "path", { "class": "body-g", d: vg });
  el(vol, "polyline", { "class": "vline-blue", points: pts(
    [0,662,353,658,700,680,960,685,1145,690,1300,685],
    [373,672,485,665,750,655,1050,660,1240,660,1353,665,1430,645,1543,615]) });
  el(vol, "polyline", { "class": "vline-tan", points: pts(
    [0,668,353,665,580,675,700,685,1145,690,1300,680,1525,680],
    [222,665,373,660,485,663,710,650,827,640,1015,650,1165,668,1353,675,1430,620,1543,557]) });
  el(vol, "polyline", { "class": "vline-red", points: pts(
    [0,665,278,665,353,665,467,680,580,690,1145,690,1187,680,1375,672,1525,672],
    [0,678,222,662,295,655,373,652,408,663,485,668,523,660,635,652,675,637,710,642,787,632,827,630,900,645,975,660,1050,672,1165,682,1353,680,1392,650,1430,555,1505,462,1543,432]) });

  /* MACD: colour, end of bar */
  var hist = "r1090 r1095 r1095 r1095 r1105 g1122 n g1120 g1122 g1145 g1150 g1168 g1185 g1190 g1195 g1205 g1200 g1200 g1175 g1172 g1168 g1160 g1145 g1130 r1103 r1092 r1080 r1078 r1082 r1085 r1090 r1065 r1060 r1057 r1055 r1055 r1032 r1022 r1018 r1020 r1030 r1040 r1042 r1045 r1042 r1048 r1052 r1040 r1042 r1075 r1088 r1095 n g1125 g1130 r1102 r1102 r1104 n r1083 r1085 r1072 r1075 r1078 r1080 r1105 g1128 g1165 g1185 g1207 g1220 g1220 g1220 g1215 g1205 g1190 g1165 g1148 r1035 r928 r912 r888 r847".split(" ");
  var macd = document.getElementById("macd");
  var mr = "", mg = "";
  hist.forEach(function (s, i) {
    if (s === "n") return;
    if (s[0] === "r") mr += "M" + xOf(i) + " " + s.slice(1) + "V1112";
    else mg += "M" + xOf(i) + " 1105V" + s.slice(1);
  });
  el(macd, "path", { "class": "hist-r", d: mr });
  el(macd, "path", { "class": "hist-g", d: mg });
  el(macd, "polyline", { "class": "vline-tan", points: pts(
    [12,1083,128,1083,318,1088,467,1115,617,1160,695,1175,805,1192,883,1197,1032,1187,1145,1182,1338,1150,1488,1110],
    [0,1093,108,1068,258,1042,295,1038,408,1035,560,1037,635,1037,787,1028,864,1015,937,1018,1015,1035,1125,1075,1240,1110,1353,1135,1392,1125,1465,1075,1543,1020]) });
  el(macd, "polyline", { "class": "vline-red", points: pts(
    [12,1087,128,1082,202,1088,318,1092,353,1107,393,1115,467,1150,543,1170,617,1200,695,1203,805,1215,883,1203,1032,1172,1145,1172,1187,1155,1338,1128,1413,1090,1488,1068],
    [0,1062,32,1052,183,1030,222,1015,258,1013,295,1022,373,1028,448,1045,485,1047,523,1037,635,1037,675,1022,710,1022,750,1010,864,1005,937,1022,975,1050,1015,1067,1125,1130,1240,1155,1278,1157,1353,1145,1430,1015,1505,950,1543,895]) });
})();
```
